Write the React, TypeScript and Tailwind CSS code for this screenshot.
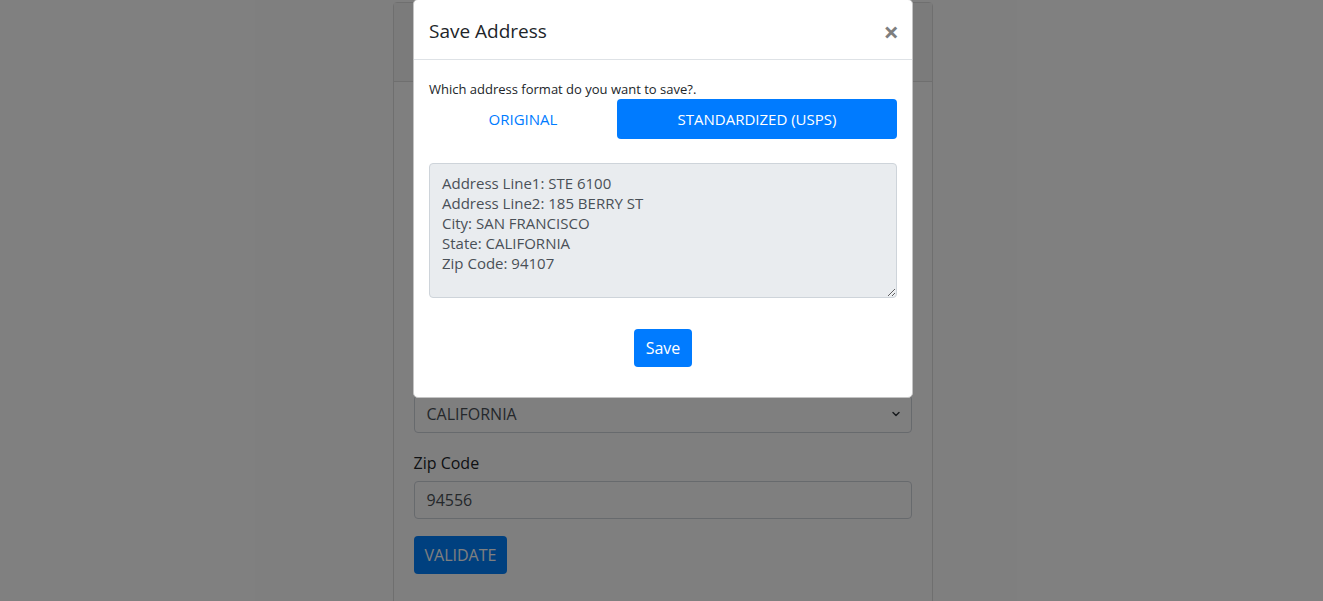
import React from 'react'
import { ChevronDown } from 'lucide-react'

const font = { fontFamily: '"Segoe UI", "Open Sans", "Noto Sans", sans-serif' }

const Field = ({ label, value }: { label: string; value: string }) => (
  <div className="mb-4">
    <label className="mb-2 block text-[16px] leading-6 text-[#212529]">{label}</label>
    <div className="flex h-[38px] items-center rounded border border-[#ced4da] px-3 text-[16px] text-[#495057]">
      {value}
    </div>
  </div>
)

const AddressCard = () => (
  <div className="flex justify-center pl-[2px] pt-[2px]">
    <div className="h-[640px] w-[540px] rounded border border-[#dfdfdf] bg-white">
      <div className="h-[79px] border-b border-[#dfdfdf] bg-[#f7f7f7]" />
      <div className="px-5 pt-[23px]">
        <Field label="Address Line1" value="185 Berry St" />
        <Field label="Address Line2" value="Suite 6100" />
        <Field label="City" value="San Francisco" />
        <label className="mb-2 block text-[16px] leading-6 text-[#212529]">State</label>
        <div className="mb-[18px] flex h-[38px] items-center justify-between rounded border border-[#ced4da] px-3 text-[16px] text-[#495057]">
          CALIFORNIA
          <ChevronDown size={12} strokeWidth={3} className="-mr-[3px] text-[#343a40]" />
        </div>
        <div className="mb-[17px]">
          <label className="mb-[6px] block text-[16px] leading-6 text-[#212529]">Zip Code</label>
          <div className="flex h-[38px] items-center rounded border border-[#ced4da] px-3 text-[16px] text-[#495057]">
            94556
          </div>
        </div>
        <button className="h-[38px] rounded bg-[#0080ff] px-[11px] text-[16px] text-white">VALIDATE</button>
      </div>
    </div>
  </div>
)

const SaveModal = () => (
  <div className="absolute inset-0 flex justify-center pl-[3px]">
    <div className="mt-[-1px] h-[399px] w-[500px] rounded-[5px] border border-[#c4c4c4] bg-white">
      <div className="flex items-center justify-between border-b border-[#dee2e6] px-[15px] pb-[13px] pt-4">
        <h5 className="text-[19px] leading-[30px] text-[#212529]">Save Address</h5>
        <button className="mr-[-2px] text-[27px] font-bold leading-none text-black opacity-50">×</button>
      </div>
      <div className="px-[15px] pt-[20px]">
        <p className="text-[13px] leading-[18px] text-[#212529]">Which address format do you want to save?.</p>
        <div className="mt-[1px] flex">
          <button className="h-10 w-[188px] shrink-0 text-[15px] text-[#007bff]">ORIGINAL</button>
          <button className="h-10 w-[280px] shrink-0 rounded bg-[#007bff] text-[15px] text-white">STANDARDIZED (USPS)</button>
        </div>
        <textarea
          readOnly
          className="mt-6 block h-[135px] w-[468px] rounded border border-[#ced4da] bg-[#e9ecef] px-3 pt-[9px] text-[15px] leading-5 text-[#495057] outline-none"
          style={font}
          value={'Address Line1: STE 6100\nAddress Line2: 185 BERRY ST\nCity: SAN FRANCISCO\nState: CALIFORNIA\nZip Code: 94107'}
        />
        <div className="mt-[31px] flex justify-center">
          <button className="h-[38px] rounded bg-[#007bff] px-3 text-[16px] text-white">Save</button>
        </div>
      </div>
    </div>
  </div>
)

export default function App() {
  return (
    <div className="relative h-[601px] overflow-hidden bg-white" style={font}>
      <AddressCard />
      <div className="absolute inset-0 bg-black/50" />
      <SaveModal />
    </div>
  )
}
